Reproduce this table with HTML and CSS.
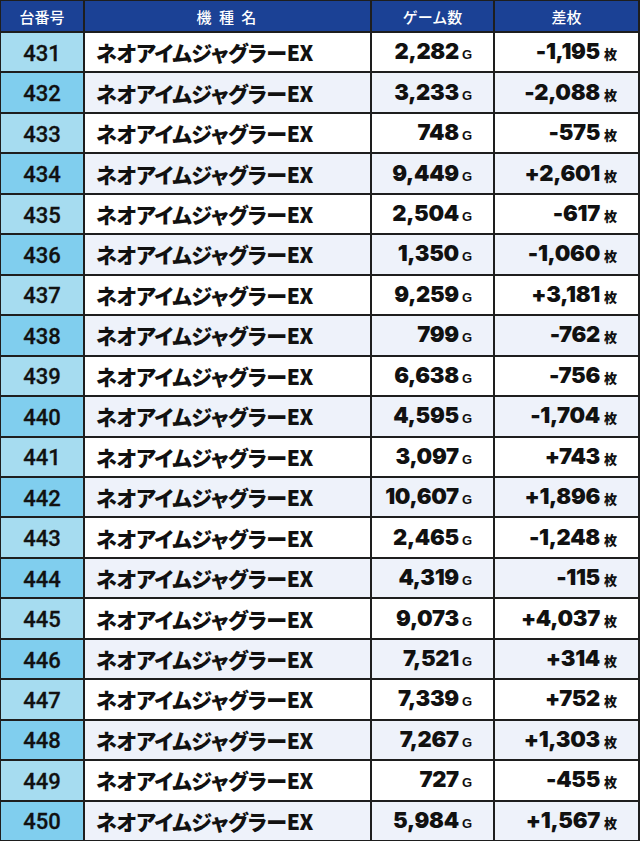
FILE: index.html
```html
<!DOCTYPE html>
<html lang="ja">
<head>
<meta charset="utf-8">
<link rel="stylesheet" href="styles.css">
</head>
<body>
<div class="table" id="t">
  <div class="row head">
    <div class="hc">台番号</div>
    <div class="hc spaced">機 種 名</div>
    <div class="hc">ゲーム数</div>
    <div class="hc">差枚</div>
  </div>
</div>
<script src="app.js"></script>
</body>
</html>
```
FILE: styles.css
```css
html, body { margin: 0; padding: 0; background: #fff; }
.table {
  width: 640px;
  height: 841px;
  box-sizing: border-box;
  background: #1e1e1e;
  border-style: solid;
  border-color: #1e1e1e;
  border-width: 1px 2px 1px 1px;
  display: flex;
  flex-direction: column;
  gap: 2px;
}
.row {
  display: grid;
  grid-template-columns: 82px 285px 121px 1fr;
  column-gap: 2px;
  flex: 1 1 0;
  min-height: 0;
}
.row.head { flex: 0 0 30px; }
.hc {
  background: #1b4195;
  color: #fff;
  font-family: "Noto Sans CJK JP", sans-serif;
  font-weight: 500;
  font-size: 15px;
  display: flex;
  align-items: center;
  justify-content: center;
}
.hc.spaced { letter-spacing: 2px; }
.no {
  background: #a6dcf0;
  font-family: Roboto, "Liberation Sans", sans-serif;
  font-weight: 500;
  font-size: 22px;
  -webkit-text-stroke: 0.3px #111;
  color: #111;
  display: flex;
  align-items: center;
  justify-content: center;
  padding-top: 2px;
  box-sizing: border-box;
}
.alt .no { background: #80ceee; }
.name, .num { background: #fff; }
.alt .name, .alt .num { background: #eef2fa; }
.name {
  font-family: "Noto Sans CJK JP", sans-serif;
  font-weight: 900;
  font-size: 21px;
  font-feature-settings: "palt";
  letter-spacing: -0.3px;
  color: #111;
  display: flex;
  align-items: center;
  padding-left: 11px;
}
.num {
  display: flex;
  align-items: center;
  justify-content: flex-end;
  padding-right: 21px;
  padding-bottom: 2px;
  box-sizing: border-box;
  color: #111;
}
.in {
  display: flex;
  align-items: baseline;
}
.val {
  font-family: Inter, "DejaVu Sans", sans-serif;
  font-weight: 900;
  font-size: 22px;
  letter-spacing: -0.3px;
}
.unit {
  font-family: "Liberation Sans", sans-serif;
  font-weight: bold;
  font-size: 13px;
  margin-left: 3px;
}
.unit.mai {
  font-family: "Noto Sans CJK JP", sans-serif;
  font-weight: 900;
  font-size: 13px;
  margin-left: 4px;
}
```
FILE: app.js
```js
var data = [
  [431,"2,282","-1,195"],[432,"3,233","-2,088"],[433,"748","-575"],[434,"9,449","+2,601"],
  [435,"2,504","-617"],[436,"1,350","-1,060"],[437,"9,259","+3,181"],[438,"799","-762"],
  [439,"6,638","-756"],[440,"4,595","-1,704"],[441,"3,097","+743"],[442,"10,607","+1,896"],
  [443,"2,465","-1,248"],[444,"4,319","-115"],[445,"9,073","+4,037"],[446,"7,521","+314"],
  [447,"7,339","+752"],[448,"7,267","+1,303"],[449,"727","-455"],[450,"5,984","+1,567"]
];
var t = document.getElementById("t");
data.forEach(function (d, i) {
  var r = document.createElement("div");
  r.className = "row" + (i % 2 ? " alt" : "");
  r.innerHTML =
    '<div class="no">' + d[0] + '</div>' +
    '<div class="name">ネオアイムジャグラーEX</div>' +
    '<div class="num"><span class="in"><span class="val">' + d[1] + '</span><span class="unit">G</span></span></div>' +
    '<div class="num"><span class="in"><span class="val">' + d[2] + '</span><span class="unit mai">枚</span></span></div>';
  t.appendChild(r);
});
```
